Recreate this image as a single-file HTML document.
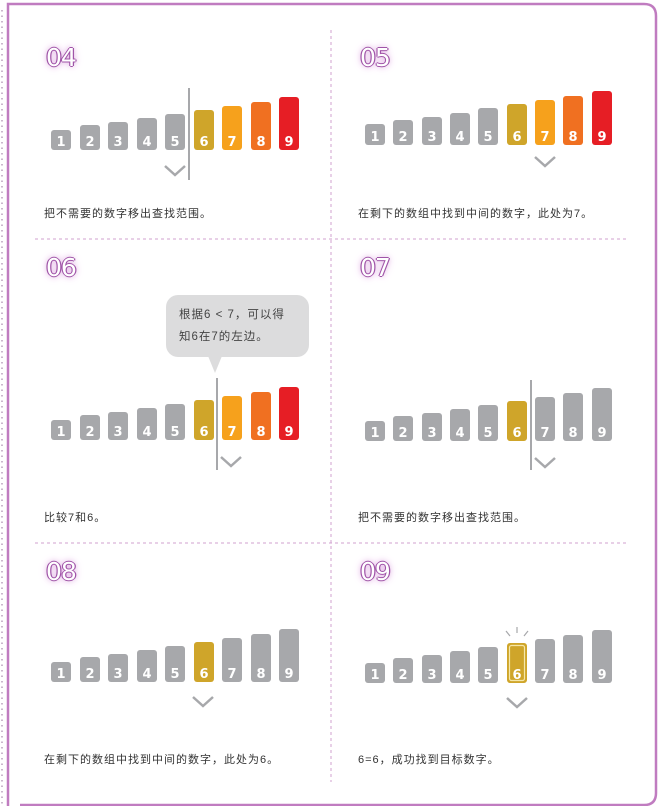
<!DOCTYPE html>
<html><head><meta charset="utf-8"><style>
html,body{margin:0;padding:0;background:#fff;}
body{width:661px;height:806px;overflow:hidden;position:relative;font-family:"Liberation Sans","Noto Sans CJK SC",sans-serif;}
.cap{position:absolute;font-size:11px;color:#333;letter-spacing:1px;white-space:nowrap;}
.num{position:absolute;font-family:"DejaVu Sans","Liberation Sans",sans-serif;font-weight:normal;font-size:25px;line-height:28px;color:#fff;letter-spacing:-1px;
text-shadow:0 0 1px #a055a8,1.2px 0 0 #a055a8,-1.2px 0 0 #a055a8,0 1.2px 0 #a055a8,0 -1.2px 0 #a055a8,0 0 6px #d9a0dc,0 0 10px #e8c0ea;}
.bub{position:absolute;left:166px;top:295px;width:143px;height:62px;background:#dcdcdd;border-radius:12px;font-size:11.5px;color:#444;letter-spacing:1px;line-height:22px;box-sizing:border-box;padding:9px 0 0 13px;}
</style></head><body>
<svg width="661" height="806" style="position:absolute;left:0;top:0" xmlns="http://www.w3.org/2000/svg">
<line x1="2" y1="10" x2="2" y2="806" stroke="#b9a0bc" stroke-width="1.5" stroke-dasharray="1.5 4"/>
<path d="M8 806 V4 H644 Q656 4 656 16 V793 Q656 805 644 805 H20" fill="none" stroke="#c07cc0" stroke-width="2.5"/>
<line x1="331" y1="30" x2="331" y2="782" stroke="#d0a0cf" stroke-width="1" stroke-dasharray="3 3"/>
<line x1="35" y1="239" x2="628" y2="239" stroke="#d0a0cf" stroke-width="1" stroke-dasharray="3 3"/>
<line x1="35" y1="543" x2="628" y2="543" stroke="#d0a0cf" stroke-width="1" stroke-dasharray="3 3"/>
<g font-family="DejaVu Sans, Liberation Sans, sans-serif" font-weight="bold" font-size="13" fill="#fff" text-anchor="middle">
<g transform="translate(51,150)">
<rect x="0" y="-20" width="20" height="20" rx="3" fill="#a7a8ab"/><text x="10" y="-4">1</text>
<rect x="29" y="-25" width="20" height="25" rx="3" fill="#a7a8ab"/><text x="39" y="-4">2</text>
<rect x="57" y="-28" width="20" height="28" rx="3" fill="#a7a8ab"/><text x="67" y="-4">3</text>
<rect x="86" y="-32" width="20" height="32" rx="3" fill="#a7a8ab"/><text x="96" y="-4">4</text>
<rect x="114" y="-36" width="20" height="36" rx="3" fill="#a7a8ab"/><text x="124" y="-4">5</text>
<rect x="143" y="-40" width="20" height="40" rx="3" fill="#cfa52a"/><text x="153" y="-4">6</text>
<rect x="171" y="-44" width="20" height="44" rx="3" fill="#f6a11c"/><text x="181" y="-4">7</text>
<rect x="200" y="-48" width="20" height="48" rx="3" fill="#f07021"/><text x="210" y="-4">8</text>
<rect x="228" y="-53" width="20" height="53" rx="3" fill="#e61e25"/><text x="238" y="-4">9</text>
</g>
<g transform="translate(365,145)">
<rect x="0" y="-21" width="20" height="21" rx="3" fill="#a7a8ab"/><text x="10" y="-4">1</text>
<rect x="28" y="-25" width="20" height="25" rx="3" fill="#a7a8ab"/><text x="38" y="-4">2</text>
<rect x="57" y="-28" width="20" height="28" rx="3" fill="#a7a8ab"/><text x="67" y="-4">3</text>
<rect x="85" y="-32" width="20" height="32" rx="3" fill="#a7a8ab"/><text x="95" y="-4">4</text>
<rect x="113" y="-37" width="20" height="37" rx="3" fill="#a7a8ab"/><text x="123" y="-4">5</text>
<rect x="142" y="-41" width="20" height="41" rx="3" fill="#cfa52a"/><text x="152" y="-4">6</text>
<rect x="170" y="-45" width="20" height="45" rx="3" fill="#f6a11c"/><text x="180" y="-4">7</text>
<rect x="198" y="-49" width="20" height="49" rx="3" fill="#f07021"/><text x="208" y="-4">8</text>
<rect x="227" y="-54" width="20" height="54" rx="3" fill="#e61e25"/><text x="237" y="-4">9</text>
</g>
<g transform="translate(51,440)">
<rect x="0" y="-20" width="20" height="20" rx="3" fill="#a7a8ab"/><text x="10" y="-4">1</text>
<rect x="29" y="-25" width="20" height="25" rx="3" fill="#a7a8ab"/><text x="39" y="-4">2</text>
<rect x="57" y="-28" width="20" height="28" rx="3" fill="#a7a8ab"/><text x="67" y="-4">3</text>
<rect x="86" y="-32" width="20" height="32" rx="3" fill="#a7a8ab"/><text x="96" y="-4">4</text>
<rect x="114" y="-36" width="20" height="36" rx="3" fill="#a7a8ab"/><text x="124" y="-4">5</text>
<rect x="143" y="-40" width="20" height="40" rx="3" fill="#cfa52a"/><text x="153" y="-4">6</text>
<rect x="171" y="-44" width="20" height="44" rx="3" fill="#f6a11c"/><text x="181" y="-4">7</text>
<rect x="200" y="-48" width="20" height="48" rx="3" fill="#f07021"/><text x="210" y="-4">8</text>
<rect x="228" y="-53" width="20" height="53" rx="3" fill="#e61e25"/><text x="238" y="-4">9</text>
</g>
<g transform="translate(365,441)">
<rect x="0" y="-20" width="20" height="20" rx="3" fill="#a7a8ab"/><text x="10" y="-4">1</text>
<rect x="28" y="-25" width="20" height="25" rx="3" fill="#a7a8ab"/><text x="38" y="-4">2</text>
<rect x="57" y="-28" width="20" height="28" rx="3" fill="#a7a8ab"/><text x="67" y="-4">3</text>
<rect x="85" y="-32" width="20" height="32" rx="3" fill="#a7a8ab"/><text x="95" y="-4">4</text>
<rect x="113" y="-36" width="20" height="36" rx="3" fill="#a7a8ab"/><text x="123" y="-4">5</text>
<rect x="142" y="-40" width="20" height="40" rx="3" fill="#cfa52a"/><text x="152" y="-4">6</text>
<rect x="170" y="-44" width="20" height="44" rx="3" fill="#a7a8ab"/><text x="180" y="-4">7</text>
<rect x="198" y="-48" width="20" height="48" rx="3" fill="#a7a8ab"/><text x="208" y="-4">8</text>
<rect x="227" y="-53" width="20" height="53" rx="3" fill="#a7a8ab"/><text x="237" y="-4">9</text>
</g>
<g transform="translate(51,682)">
<rect x="0" y="-20" width="20" height="20" rx="3" fill="#a7a8ab"/><text x="10" y="-4">1</text>
<rect x="29" y="-25" width="20" height="25" rx="3" fill="#a7a8ab"/><text x="39" y="-4">2</text>
<rect x="57" y="-28" width="20" height="28" rx="3" fill="#a7a8ab"/><text x="67" y="-4">3</text>
<rect x="86" y="-32" width="20" height="32" rx="3" fill="#a7a8ab"/><text x="96" y="-4">4</text>
<rect x="114" y="-36" width="20" height="36" rx="3" fill="#a7a8ab"/><text x="124" y="-4">5</text>
<rect x="143" y="-40" width="20" height="40" rx="3" fill="#cfa52a"/><text x="153" y="-4">6</text>
<rect x="171" y="-44" width="20" height="44" rx="3" fill="#a7a8ab"/><text x="181" y="-4">7</text>
<rect x="200" y="-48" width="20" height="48" rx="3" fill="#a7a8ab"/><text x="210" y="-4">8</text>
<rect x="228" y="-53" width="20" height="53" rx="3" fill="#a7a8ab"/><text x="238" y="-4">9</text>
</g>
<g transform="translate(365,683)">
<rect x="0" y="-20" width="20" height="20" rx="3" fill="#a7a8ab"/><text x="10" y="-4">1</text>
<rect x="28" y="-25" width="20" height="25" rx="3" fill="#a7a8ab"/><text x="38" y="-4">2</text>
<rect x="57" y="-28" width="20" height="28" rx="3" fill="#a7a8ab"/><text x="67" y="-4">3</text>
<rect x="85" y="-32" width="20" height="32" rx="3" fill="#a7a8ab"/><text x="95" y="-4">4</text>
<rect x="113" y="-36" width="20" height="36" rx="3" fill="#a7a8ab"/><text x="123" y="-4">5</text>
<rect x="142" y="-40" width="20" height="40" rx="3" fill="#cfa52a"/>
<rect x="144.5" y="-37.5" width="15" height="35" rx="2" fill="none" stroke="#f6e7a8" stroke-width="1.2"/><text x="152" y="-4">6</text>
<rect x="170" y="-44" width="20" height="44" rx="3" fill="#a7a8ab"/><text x="180" y="-4">7</text>
<rect x="198" y="-48" width="20" height="48" rx="3" fill="#a7a8ab"/><text x="208" y="-4">8</text>
<rect x="227" y="-53" width="20" height="53" rx="3" fill="#a7a8ab"/><text x="237" y="-4">9</text>
<g stroke="#a7a8ab" stroke-width="1.2"><line x1="152" y1="-50" x2="152" y2="-56"/><line x1="145" y1="-47" x2="141" y2="-52"/><line x1="159" y1="-47" x2="163" y2="-52"/></g>
</g>
</g>
<g stroke="#a7a8ab" fill="none" stroke-width="2.5">
<line x1="189" y1="88" x2="189" y2="180" stroke-width="2"/>
<path d="M165 166 L175 175 L185 166"/>
<path d="M535 157 L545 166 L555 157"/>
<line x1="217" y1="378" x2="217" y2="470" stroke-width="2"/>
<path d="M221 457 L231 466 L241 457"/>
<line x1="531" y1="380" x2="531" y2="470" stroke-width="2"/>
<path d="M535 458 L545 467 L555 458"/>
<path d="M193 697 L203 706 L213 697"/>
<path d="M507 698 L517 707 L527 698"/>
</g>
<path d="M208 356 L215 373 L222 356 Z" fill="#dcdcdd"/>
</svg>
<div class="num" style="left:46px;top:44px">04</div>
<div class="num" style="left:360px;top:44px">05</div>
<div class="num" style="left:46px;top:254px">06</div>
<div class="num" style="left:360px;top:254px">07</div>
<div class="num" style="left:46px;top:558px">08</div>
<div class="num" style="left:360px;top:558px">09</div>
<div class="bub">根据6 &lt; 7，可以得<br>知6在7的左边。</div>
<div class="cap" style="left:44px;top:205px">把不需要的数字移出查找范围。</div>
<div class="cap" style="left:358px;top:205px">在剩下的数组中找到中间的数字，此处为7。</div>
<div class="cap" style="left:44px;top:509px">比较7和6。</div>
<div class="cap" style="left:358px;top:509px">把不需要的数字移出查找范围。</div>
<div class="cap" style="left:44px;top:751px">在剩下的数组中找到中间的数字，此处为6。</div>
<div class="cap" style="left:358px;top:751px">6=6，成功找到目标数字。</div>
</body></html>
